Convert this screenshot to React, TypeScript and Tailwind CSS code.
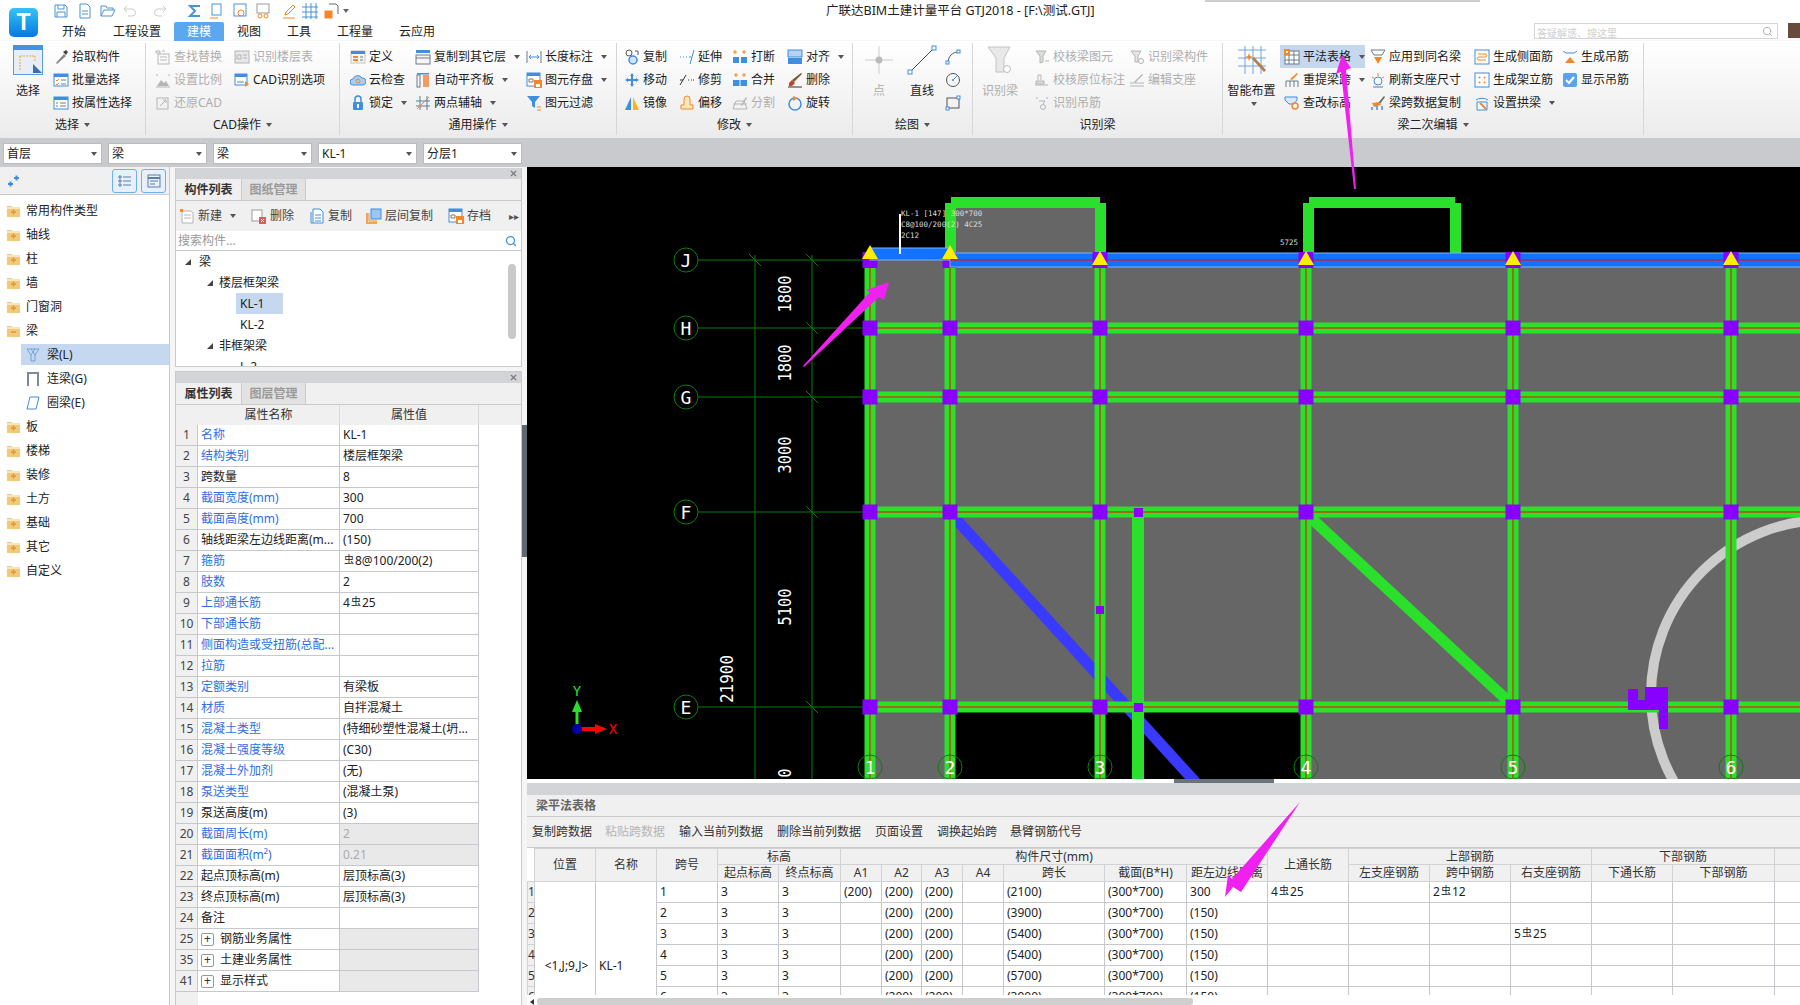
import type { ReactNode } from "react";
import { Search, X } from "lucide-react";

const B = "#3f8ee0";
const O = "#f5872a";
const G = "#b5b5b5";
const D = "#6d7a88";

// ribbon icons, all in a 16x16 box
const icons: Record<string, ReactNode> = {
  pick: <><path d="M3 14l8-9 2 2-9 8z" fill="#888" /><path d="M10 3l3 3 2-3-2-2z" fill="#444" /></>,
  batch: <><rect x="1" y="2" width="14" height="12" fill="#fff" stroke={B} /><rect x="1" y="2" width="14" height="3" fill={B} /><path d="M3 8l1 1 2-2M3 12l1 1 2-2" stroke={O} fill="none" /><path d="M8 8h5M8 12h5" stroke={D} /></>,
  propsel: <><rect x="1" y="2" width="14" height="12" fill="#fff" stroke={B} /><rect x="1" y="2" width="14" height="3" fill={B} /><path d="M3 8h2M3 11h2M7 8h6M7 11h6" stroke={D} /></>,
  find: <><rect x="3" y="5" width="11" height="10" fill="none" stroke={G} /><path d="M1 2h4v2H1zM7 2h3M5 8h7M5 11h7" stroke={G} fill="none" /></>,
  scale: <><path d="M1 3h2M13 3h2M1 15h14" stroke={G} /><path d="M2 14l4-6 3 3 2-2 3 5z" fill={G} /></>,
  restore: <><rect x="2" y="3" width="11" height="11" fill="none" stroke={G} /><path d="M5 11l6-6M8 5h3v3" stroke={G} fill="none" /></>,
  floors: <><rect x="1" y="2" width="14" height="12" fill="#e8e8e8" stroke={G} /><path d="M3 6h4v4H3zM9 6h4M9 9h4" stroke={G} fill="none" /></>,
  cadopt: <><rect x="1" y="2" width="12" height="11" fill="#fff" stroke={B} /><rect x="1" y="2" width="12" height="3" fill={B} /><path d="M3 10h7" stroke={B} /><path d="M11 9l4 3-4 3z" fill={O} /></>,
  define: <><rect x="1" y="2" width="14" height="12" fill="#f5f5f5" stroke="#c4c4c4" /><rect x="1" y="2" width="14" height="3" fill={B} /><path d="M3 8h5M3 11h5" stroke={O} strokeWidth="2" /><path d="M10 8h3M10 11h3" stroke={D} /></>,
  cloud: <><path d="M3 13a3 3 0 010-6 5 5 0 019-1 3.5 3.5 0 011 7z" fill="#a9cdf0" stroke={B} /><circle cx="8" cy="9" r="2" fill="none" stroke={O} /></>,
  lock: <><rect x="3" y="7" width="10" height="8" rx="1" fill={B} /><path d="M5 7V4a3 3 0 016 0v3" fill="none" stroke={B} strokeWidth="1.5" /><rect x="7" y="9" width="2" height="4" fill="#fff" /></>,
  copyfloor: <><rect x="1" y="1" width="14" height="3" fill={B} /><rect x="1" y="6" width="14" height="9" fill="#f5f5f5" stroke={D} /><path d="M1 9h14" stroke={D} /></>,
  autoalign: <><rect x="2" y="1" width="12" height="1.5" fill={B} /><rect x="2" y="3" width="3" height="12" fill="none" stroke={D} /><rect x="8" y="3" width="6" height="12" fill="#f59a62" /></>,
  twopoint: <><path d="M1 6h14M1 11h14M5 1v14M12 1v14" stroke={D} /><path d="M2 14L14 2" stroke={O} /></>,
  dim: <><path d="M1 2v12M15 2v12" stroke={D} /><path d="M3 8h10M5 6L3 8l2 2M11 6l2 2-2 2" stroke={B} fill="none" /></>,
  savepic: <><rect x="1" y="1" width="13" height="13" fill="#fff" stroke={B} /><rect x="1" y="1" width="13" height="3" fill={B} /><path d="M3 7h4v3H3z" fill="none" stroke={D} /><rect x="8" y="8" width="8" height="8" fill={O} /><rect x="10" y="12" width="4" height="3" fill="#fff" /></>,
  funnel: <><path d="M1 1h13L9 7v6l-3-2V7z" fill={B} /><path d="M11 12h4M11 15h4" stroke={O} /></>,
  copy: <><circle cx="5" cy="4" r="3" fill="none" stroke="#555" /><circle cx="9" cy="11" r="4" fill="#cfe3f7" stroke={B} strokeWidth="1.5" /><path d="M11 2h3v4" stroke="#555" fill="none" /></>,
  move: <path d="M8 1l2 3H9v3h3V6l3 2-3 2V9H9v3h1l-2 3-2-3h1V9H4v1L1 8l3-2v1h3V4H6z" fill={B} />,
  mirror: <><path d="M7 2v13H1z" fill={B} /><path d="M9 2v13h6z" fill="#fdb515" /></>,
  extend: <path d="M1 8h1M4 8h1M7 8h1M10 8h2M15 1L11 15" stroke={B} fill="none" />,
  trim: <path d="M1 13l6-10M1 8h3M9 8h1M12 8h1M14 8h1" stroke="#333" fill="none" />,
  offset: <path d="M2 14v-4h3V4a3 3 0 016 0v6h3v4z" fill="#fce7b8" stroke={O} />,
  brk: <><path d="M3 1v4M1 3h4M12 1v4M10 3h4" stroke={O} /><rect x="1" y="8" width="6" height="6" fill={B} /><rect x="9" y="8" width="6" height="6" fill={B} /></>,
  merge: <><path d="M4 1v4M2 3h4M12 1v4M10 3h4" stroke={O} /><rect x="1" y="8" width="14" height="6" fill={B} /><path d="M8 8v6" stroke="#fff" /></>,
  split: <><path d="M1 14h14L12 6H4zM1 9h14" fill="none" stroke={G} /><path d="M9 10l5-8 1 1-5 8z" fill={G} /></>,
  align: <><rect x="1" y="1" width="14" height="7" fill="#b7d3f2" stroke={B} /><rect x="1" y="9" width="14" height="6" fill={B} /></>,
  erase: <><path d="M14 1l1 1-8 8-2-2z" fill="#7a5a3a" /><path d="M5 8l3 3-3 3H2v-3z" fill="#c0451f" /><path d="M1 15h14" stroke="#333" /></>,
  rotate: <><circle cx="8" cy="9" r="6" fill="none" stroke={B} strokeWidth="1.5" /><path d="M6 1l5 2-5 3z" fill={O} /></>,
  arc: <><path d="M3 14C3 7 8 3 13 3" fill="none" stroke="#555" /><rect x="1" y="12" width="3" height="3" fill="#fff" stroke={B} /><rect x="12" y="1" width="3" height="3" fill="#fff" stroke={B} /></>,
  circle: <><circle cx="8" cy="8" r="6.5" fill="none" stroke="#555" /><path d="M8 8l4-4" stroke={B} /><circle cx="8" cy="8" r="1" fill={B} /></>,
  rect: <><rect x="2" y="3" width="12" height="10" fill="none" stroke="#555" /><rect x="1" y="12" width="3" height="3" fill="#fff" stroke={B} /><rect x="12" y="1" width="3" height="3" fill="#fff" stroke={B} /></>,
  chk: <><path d="M2 2h10l-3 5v6l-3 1V7z" fill="#ddd" stroke={G} /><path d="M11 12h4" stroke={G} /></>,
  chk2: <><path d="M2 9h8v3H2zM1 13h13" stroke={G} fill="#ddd" /><path d="M4 8V3h3v5" stroke={G} fill="none" /></>,
  chk3: <><path d="M2 3h2M12 3h2M5 6h6l-2 3" stroke={G} fill="none" /><circle cx="9" cy="12" r="2.5" fill="none" stroke={G} /></>,
  chk4: <><path d="M2 2h10l-3 5v6H6V7z" fill="#e5e5e5" stroke={G} /><circle cx="12" cy="12" r="2.5" fill="none" stroke={G} /></>,
  edit: <><path d="M1 11h14M1 14h14" stroke={G} /><path d="M5 10l8-8 1 1-8 8z" fill={G} /></>,
  grid: <><rect x="1" y="2" width="14" height="13" fill="#fff" stroke={D} /><path d="M5 2v13M10 2v13M1 6h14M1 11h14" stroke={D} /><rect x="0" y="0" width="6" height="6" fill={O} /><rect x="2" y="2" width="2" height="2" fill="#fff" /></>,
  reget: <><path d="M2 9h12M2 9v6M6 9v6M10 9v6M14 9v6" stroke={D} fill="none" /><path d="M6 7l7-6 1 1-6 6z" fill={O} /></>,
  level: <><path d="M1 2h12v3l-3 4H5L1 5z" fill="#dbe8f6" stroke={B} /><circle cx="11" cy="11" r="3" fill="none" stroke={O} strokeWidth="1.5" /></>,
  applysame: <><path d="M1 1h14l-3 5H4z" fill="none" stroke={D} /><path d="M4 8h8l-4 7z" fill={O} /></>,
  refresh: <><circle cx="8" cy="9" r="4" fill="none" stroke={B} /><path d="M8 1v3M2 5l2 1M14 5l-2 1" stroke={O} /><path d="M3 15h10" stroke={D} /></>,
  spancopy: <><path d="M9 7l5-6 1 1-5 7z" fill="#666" /><path d="M2 8l7-1 2 3-7 2z" fill={O} /><path d="M2 15v-3M7 15v-4M12 15v-4" stroke={B} strokeWidth="1.5" /></>,
  side: <><rect x="1" y="1" width="14" height="14" fill="#fff" stroke={B} /><path d="M4 5h8a2 2 0 010 3H4a2 2 0 000 3h8" fill="none" stroke={O} /></>,
  stand: <><rect x="1" y="1" width="14" height="14" fill="#fff" stroke={B} /><path d="M5 5h1v1H5zM10 5h1v1h-1zM5 10h1v1H5zM10 10h1v1h-1z" fill={O} stroke={O} /></>,
  arch: <><path d="M2 5a8 5 0 0112 0M3 7h10v8H3z" fill="#f2f7fc" stroke={B} /><path d="M6 8l6 6" stroke={O} strokeWidth="2" /></>,
  hanger: <><path d="M1 2l3 2h8l3-2" stroke={B} fill="none" /><path d="M3 14h10L8 8z" fill={O} /></>,
  check: <><rect x="1" y="1" width="14" height="14" rx="2" fill="#5aa3ee" /><path d="M4 8l3 3 5-6" stroke="#fff" strokeWidth="2" fill="none" /></>,
  newdoc: <><path d="M3 3h9l2 2v10H3z" fill="#fff" stroke={G} /><path d="M5 7h7M5 10h7" stroke={G} /><rect x="1" y="1" width="3" height="3" fill={O} /></>,
  del: <><rect x="1" y="2" width="10" height="11" fill="#fff" stroke="#999" /><rect x="8" y="9" width="7" height="7" fill="#e05a5a" /><path d="M10 11l3 3M13 11l-3 3" stroke="#fff" /></>,
  dup: <><path d="M4 1h7l3 3v11H4z" fill="#fff" stroke={B} /><path d="M2 4v11h2M6 7h6M6 10h6M6 13h6" stroke={B} fill="none" /></>,
  floorcopy: <><rect x="5" y="1" width="10" height="10" fill="#9cc6f2" stroke={B} /><path d="M1 5v10h10" stroke={O} strokeWidth="1.5" fill="none" /><path d="M3 5v8h8" stroke={O} fill="none" /></>,
};

function Ico({ name, size = 16 }: { name: string; size?: number }) {
  return (
    <svg width={size} height={size} viewBox="0 0 16 16" className="shrink-0">
      {icons[name]}
    </svg>
  );
}

function Caret({ off }: { off?: boolean }) {
  return <span className={`ml-[5px] h-0 w-0 border-x-[3px] border-t-[4px] border-x-transparent ${off ? "border-t-[#bbb]" : "border-t-[#555]"}`} />;
}

function Tool({ icon, text, caret, off, active }: { icon: string; text: string; caret?: boolean; off?: boolean; active?: boolean }) {
  return (
    <div className={`flex h-[23px] items-center gap-[3px] whitespace-nowrap text-[12px] leading-none ${off ? "text-[#aeaeae]" : "text-[#1c1c1c]"} ${active ? "bg-[#c5d7ef] pl-[4px]" : ""}`}>
      <Ico name={icon} />
      <span>{text}</span>
      {caret && <Caret />}
    </div>
  );
}

function Group({ label, caret = true, className, children }: { label: string; caret?: boolean; className: string; children: ReactNode }) {
  return (
    <div className={`flex h-[92px] shrink-0 flex-col border-r border-[#d4d6d8] ${className}`}>
      <div className="flex h-[72px] pt-[2px]">{children}</div>
      <div className="flex h-[22px] items-center justify-center text-[12px] leading-none text-[#222]">
        {label}
        {caret && <Caret />}
      </div>
    </div>
  );
}

function BigLabel({ text, off }: { text: string; off?: boolean }) {
  return <div className={`mt-[10px] whitespace-nowrap text-center text-[12px] leading-none ${off ? "text-[#aeaeae]" : "text-[#1c1c1c]"}`}>{text}</div>;
}

function Ribbon() {
  return (
    <div className="flex h-[97px] bg-gradient-to-b from-white to-[#ebebeb] pt-[2px] shadow-[0_1px_2px_#888]">
      <Group label="选择" className="w-[146px]">
        <div className="ml-[13px] w-[40px]">
          <svg width="30" height="30" viewBox="0 0 30 30">
            <rect x=".5" y=".5" width="29" height="29" fill="#e8eef7" stroke="#5b9be0" />
            <rect width="30" height="5" fill="#4a90e2" />
            <path d="M7 11h15v6M7 11v14" stroke="#f5a623" strokeDasharray="2 1" fill="none" />
            <path d="M20 19l9 9h-9z" fill="#3a6fb0" />
          </svg>
          <div className="w-[30px]"><BigLabel text="选择" /></div>
        </div>
        <div>
          <Tool icon="pick" text="拾取构件" />
          <Tool icon="batch" text="批量选择" />
          <Tool icon="propsel" text="按属性选择" />
        </div>
      </Group>
      <Group label="CAD操作" className="w-[194px]">
        <div className="ml-[9px] w-[79px]">
          <Tool icon="find" text="查找替换" off />
          <Tool icon="scale" text="设置比例" off />
          <Tool icon="restore" text="还原CAD" off />
        </div>
        <div>
          <Tool icon="floors" text="识别楼层表" off />
          <Tool icon="cadopt" text="CAD识别选项" />
        </div>
      </Group>
      <Group label="通用操作" className="w-[277px]">
        <div className="ml-[10px] w-[65px]">
          <Tool icon="define" text="定义" />
          <Tool icon="cloud" text="云检查" />
          <Tool icon="lock" text="锁定" caret />
        </div>
        <div className="w-[111px]">
          <Tool icon="copyfloor" text="复制到其它层" caret />
          <Tool icon="autoalign" text="自动平齐板" caret />
          <Tool icon="twopoint" text="两点辅轴" caret />
        </div>
        <div>
          <Tool icon="dim" text="长度标注" caret />
          <Tool icon="savepic" text="图元存盘" caret />
          <Tool icon="funnel" text="图元过滤" />
        </div>
      </Group>
      <Group label="修改" className="w-[236px]">
        <div className="ml-[7px] w-[55px]">
          <Tool icon="copy" text="复制" />
          <Tool icon="move" text="移动" />
          <Tool icon="mirror" text="镜像" />
        </div>
        <div className="w-[53px]">
          <Tool icon="extend" text="延伸" />
          <Tool icon="trim" text="修剪" />
          <Tool icon="offset" text="偏移" />
        </div>
        <div className="w-[55px]">
          <Tool icon="brk" text="打断" />
          <Tool icon="merge" text="合并" />
          <Tool icon="split" text="分割" off />
        </div>
        <div>
          <Tool icon="align" text="对齐" caret />
          <Tool icon="erase" text="删除" />
          <Tool icon="rotate" text="旋转" />
        </div>
      </Group>
      <Group label="绘图" className="w-[120px]">
        <div className="w-[52px]">
          <svg width="30" height="30" viewBox="0 0 30 30" className="mx-auto">
            <path d="M15 1v28M1 15h28" stroke="#ccc" />
            <circle cx="15" cy="15" r="3.500" fill="#bbb" />
          </svg>
          <BigLabel text="点" off />
        </div>
        <div className="w-[34px]">
          <svg width="30" height="30" viewBox="0 0 30 30" className="mx-auto">
            <path d="M3 27L27 3" stroke="#444" />
            <rect x="1" y="25" width="4" height="4" fill="#fff" stroke={B} />
            <rect x="25" y="1" width="4" height="4" fill="#fff" stroke={B} />
          </svg>
          <BigLabel text="直线" />
        </div>
        <div className="ml-[6px]">
          <div className="flex h-[23px] items-center"><Ico name="arc" /></div>
          <div className="flex h-[23px] items-center"><Ico name="circle" /></div>
          <div className="flex h-[23px] items-center"><Ico name="rect" /></div>
        </div>
      </Group>
      <Group label="识别梁" caret={false} className="w-[250px]">
        <div className="w-[54px]">
          <svg width="30" height="30" viewBox="0 0 30 30" className="mx-auto">
            <path d="M3 2h22l-6 11v14h-8V13z" fill="#e8e8e8" stroke="#c4c4c4" />
            <circle cx="22" cy="24" r="3.500" fill="#fff" stroke="#bbb" />
          </svg>
          <BigLabel text="识别梁" off />
        </div>
        <div className="ml-[7px] w-[95px]">
          <Tool icon="chk" text="校核梁图元" off />
          <Tool icon="chk2" text="校核原位标注" off />
          <Tool icon="chk3" text="识别吊筋" off />
        </div>
        <div>
          <Tool icon="chk4" text="识别梁构件" off />
          <Tool icon="edit" text="编辑支座" off />
        </div>
      </Group>
      <Group label="梁二次编辑" className="w-[421px]">
        <div className="flex w-[57px] flex-col items-center">
          <svg width="30" height="30" viewBox="0 0 30 30">
            <path d="M1 5h28M1 13h28M1 21h28M8 1v28M16 1v28M24 1v28" stroke="#6ea6e0" fill="none" />
            <path d="M15 14l12 13 2-2-12-13z" fill="#b08050" />
            <path d="M12 8l1 3 3 1-3 1-1 3-1-3-3-1 3-1z" fill={O} />
          </svg>
          <BigLabel text="智能布置" />
          <div className="mt-[5px] flex justify-center"><Caret /></div>
        </div>
        <div className="w-[90px]">
          <div className="w-[85px]"><Tool icon="grid" text="平法表格" caret active /></div>
          <div className="pl-[4px]"><Tool icon="reget" text="重提梁跨" caret /></div>
          <div className="pl-[4px]"><Tool icon="level" text="查改标高" /></div>
        </div>
        <div className="w-[104px]">
          <Tool icon="applysame" text="应用到同名梁" />
          <Tool icon="refresh" text="刷新支座尺寸" />
          <Tool icon="spancopy" text="梁跨数据复制" />
        </div>
        <div className="w-[88px]">
          <Tool icon="side" text="生成侧面筋" />
          <Tool icon="stand" text="生成架立筋" />
          <Tool icon="arch" text="设置拱梁" caret />
        </div>
        <div>
          <Tool icon="hanger" text="生成吊筋" />
          <Tool icon="check" text="显示吊筋" />
        </div>
      </Group>
    </div>
  );
}

function Qat({ children, className }: { children: ReactNode; className: string }) {
  return (
    <svg width="16" height="16" viewBox="0 0 16 16" className={`shrink-0 ${className}`} fill="none" stroke="#4b93d8">
      {children}
    </svg>
  );
}

function TopBar() {
  const tabs = [
    ["开始", "w-[52px]"],
    ["工程设置", "w-[74px]"],
    ["建模", "w-[50px]"],
    ["视图", "w-[50px]"],
    ["工具", "w-[50px]"],
    ["工程量", "w-[62px]"],
    ["云应用", "w-[62px]"],
  ];
  return (
    <div className="flex h-[41px] bg-white">
      <div className="w-[48px] shrink-0 pl-[9px] pt-[8px]">
        <div className="flex h-[29px] w-[29px] items-center justify-center rounded-[5px] bg-gradient-to-b from-[#35c3f5] to-[#0a78e0] font-['Liberation_Sans',sans-serif] text-[23px] font-bold leading-none text-white">T</div>
      </div>
      <div className="min-w-0 flex-1">
        <div className="flex h-[22px] items-center">
          <Qat className="ml-[5px]"><path d="M2 2h10l2 2v10H2zM5 2v4h6V2M4 14V9h8v5" /></Qat>
          <Qat className="ml-[8px]"><path d="M3 1h7l3 3v11H3zM5 8h6M5 11h6" /></Qat>
          <Qat className="ml-[7px]"><path d="M1 13V3h5l1 2h6v2M1 13l3-6h11l-3 6z" /></Qat>
          <Qat className="ml-[6px] opacity-50"><path d="M5 3L2 6l3 3M2 6h8a3 3 0 010 7H6" stroke="#999" /></Qat>
          <Qat className="ml-[14px] opacity-50"><path d="M11 3l3 3-3 3M14 6H6a3 3 0 000 7h4" stroke="#999" /></Qat>
          <Qat className="ml-[19px]"><path d="M13 3H3l5 5-5 5h10" strokeWidth="2" /></Qat>
          <Qat className="ml-[6px]"><rect x="3" y="1" width="9" height="11" /><path d="M1 15h8" stroke="#f5872a" /></Qat>
          <Qat className="ml-[7px]"><rect x="2" y="1" width="12" height="12" /><circle cx="9" cy="10" r="3" stroke="#f5872a" /></Qat>
          <Qat className="ml-[7px]"><rect x="2" y="1" width="12" height="9" stroke="#999" /><circle cx="5" cy="13" r="2" stroke="#f5872a" /><circle cx="11" cy="13" r="2" stroke="#f5872a" /></Qat>
          <Qat className="ml-[10px]"><path d="M12 2l2 2-7 7-3 1 1-3zM2 15h12" stroke="#f5872a" /></Qat>
          <Qat className="ml-[5px]"><path d="M4 0v16M9 0v16M14 0v16M0 4h16M0 9h16M0 14h16" /></Qat>
          <Qat className="ml-[6px]"><path d="M5 1h7l2 2v8" stroke="#666" /><rect x="1" y="8" width="7" height="7" fill="#f5872a" stroke="#f5872a" /></Qat>
          <span className="ml-[3px] h-0 w-0 border-x-[3px] border-t-[4px] border-x-transparent border-t-[#666]" />
          <span className="ml-[477px] whitespace-nowrap text-[12.5px] leading-none text-[#222]">广联达BIM土建计量平台 GTJ2018 - [F:\测试.GTJ]</span>
        </div>
        <div className="flex h-[19px] items-stretch">
          {tabs.map(([name, w]) => (
            <div key={name} className={`flex shrink-0 items-center justify-center rounded-t-[2px] text-[12px] leading-none ${w} ${name === "建模" ? "bg-[#5ba7f0] text-white" : "text-[#222]"}`}>
              {name}
            </div>
          ))}
          <div className="ml-[1086px] mt-[1px] flex h-[16px] w-[244px] items-end overflow-hidden border border-[#d5d5d5] pl-[2px] text-[10px] leading-none text-[#cfcfcf]">
            <span className="whitespace-nowrap">答疑解惑、搜这里</span>
            <Search className="mb-[1px] ml-auto mr-[4px] text-[#aaa]" size={11} />
          </div>
          <div className="ml-[10px] mt-[1px] h-[15px] w-[12px] bg-[#6a4a3a]" />
        </div>
      </div>
    </div>
  );
}

function Selects() {
  const items = ["首层", "梁", "梁", "KL-1", "分层1"];
  return (
    <div className="flex h-[29px] gap-[6px] bg-[#c8cacd] pl-[3px] pt-[5px]">
      {items.map((t, i) => (
        <div key={i} className="flex h-[21px] w-[99px] items-center justify-between border border-[#bbb] bg-white px-[3px] text-[12px] leading-none text-[#222]">
          {t}
          <span className="mr-[1px] h-0 w-0 border-x-[3px] border-t-[4px] border-x-transparent border-t-[#555]" />
        </div>
      ))}
    </div>
  );
}

function Folder({ open }: { open?: boolean }) {
  return (
    <svg width="15" height="14" viewBox="0 0 15 14" className="shrink-0">
      <path d="M1 2h5v1h8v10H1z" fill="#f2c97a" />
      <path d="M1 4h13" stroke="#fff" />
      <path d={open ? "M5 8h5" : "M5 8h5M7.500 5.500v5"} stroke="#e09a2b" strokeWidth="1.500" />
    </svg>
  );
}

function LeftPanel() {
  const before = ["常用构件类型", "轴线", "柱", "墙", "门窗洞"];
  const after = ["板", "楼梯", "装修", "土方", "基础", "其它", "自定义"];
  const row = "flex h-[24px] items-center gap-[5px] pl-[6px] text-[12px] leading-none text-[#222]";
  const sub = "flex h-[21px] items-center gap-[7px] pl-[5px] text-[12px] leading-none text-[#222]";
  return (
    <div className="flex w-[170px] shrink-0 flex-col border-r border-[#c8cacd] bg-white">
      <div className="mb-[4px] flex h-[28px] items-center border-b border-[#c8cacd] bg-[#f0f0f0] pl-[7px]">
        <svg width="12" height="12" viewBox="0 0 12 12"><path d="M1 9h5M3.500 6.500v5M7 3h5M9.500 .5v5" stroke="#3f8ee0" strokeWidth="2" /></svg>
        <div className="ml-auto mr-[3px] flex gap-[4px]">
          <div className="flex h-[24px] w-[25px] items-center justify-center rounded-[3px] border border-[#6db0f0] bg-[#e8f1fb]">
            <svg width="14" height="14" viewBox="0 0 14 14" fill="none" stroke="#5a7ea8"><path d="M1 2h2v2H1zM1 6h2v2H1zM1 10h2v2H1zM5 3h8M5 7h8M5 11h8" /></svg>
          </div>
          <div className="flex h-[24px] w-[25px] items-center justify-center rounded-[3px] border border-[#6db0f0] bg-[#e8f1fb]">
            <svg width="14" height="14" viewBox="0 0 14 14" fill="none" stroke="#5a7ea8"><rect x="1" y="1" width="12" height="12" /><path d="M1 4h12" strokeWidth="2" /><path d="M3 7h8M3 10h5" /></svg>
          </div>
        </div>
      </div>
      {before.map((t) => (
        <div key={t} className={row}><Folder />{t}</div>
      ))}
      <div className={row}><Folder open />梁</div>
      <div className="ml-[21px] mt-[1px] flex h-[21px] items-center bg-[#c6d8ef]">
        <div className={sub}>
          <svg width="14" height="14" viewBox="0 0 14 14" fill="none" stroke="#6fa3d8"><path d="M1 1h12L9 7v6H5V7zM5 1l4 6M9 1L5 7" /></svg>
          梁(L)
        </div>
      </div>
      <div className="ml-[21px] mt-[3px]">
        <div className={sub}>
          <svg width="14" height="15" viewBox="0 0 14 15" fill="none" stroke="#7a8a9c" strokeWidth="2"><path d="M2 15V2h10v13" /></svg>
          连梁(G)
        </div>
      </div>
      <div className="ml-[21px] mt-[3px]">
        <div className={sub}>
          <svg width="14" height="14" viewBox="0 0 14 14" fill="none" stroke="#3f8ee0"><path d="M4 1h9l-3 12H1z" /></svg>
          圈梁(E)
        </div>
      </div>
      <div className="h-[2px]" />
      {after.map((t) => (
        <div key={t} className={row}><Folder />{t}</div>
      ))}
    </div>
  );
}

function PanelHead({ tabs }: { tabs: [string, string] }) {
  return (
    <>
      <div className="flex h-[11px] items-center justify-end bg-[#d2d4d8] pr-[3px]">
        <X size={9} className="text-[#777]" strokeWidth={3} />
      </div>
      <div className="flex h-[22px] border-b border-[#c8cacd] bg-[#f0f0f0]">
        <div className="flex w-[65px] items-center justify-center text-[12px] font-bold leading-none text-[#333]">{tabs[0]}</div>
        <div className="flex w-[65px] items-center justify-center border-x border-[#c8cacd] bg-[#e2e2e2] text-[12px] font-bold leading-none text-[#9a9a9a]">{tabs[1]}</div>
      </div>
    </>
  );
}

function Tri() {
  return <span className="h-0 w-0 border-b-[6px] border-l-[6px] border-b-[#444] border-l-transparent" />;
}

function ComponentList() {
  const tool = "flex items-center gap-[3px] text-[12px] leading-none text-[#444]";
  const line = "flex h-[21px] items-center text-[12px] leading-none text-[#222]";
  return (
    <div className="flex h-[199px] flex-col border-x border-b border-[#c8cacd] bg-white">
      <PanelHead tabs={["构件列表", "图纸管理"]} />
      <div className="flex h-[30px] items-center bg-[#f0f0f0] pl-[3px] pr-[2px]">
        <div className={tool}><Ico name="newdoc" />新建<Caret /></div>
        <div className={`${tool} ml-[15px]`}><Ico name="del" />删除</div>
        <div className={`${tool} ml-[15px]`}><Ico name="dup" />复制</div>
        <div className={`${tool} ml-[14px]`}><Ico name="floorcopy" />层间复制</div>
        <div className={`${tool} ml-[15px]`}><Ico name="savepic" />存档</div>
        <span className="ml-auto text-[10px] leading-none text-[#555]">▸▸</span>
      </div>
      <div className="flex h-[20px] items-center justify-between border-b border-[#c8cacd] px-[2px] text-[12px] leading-none text-[#999]">
        搜索构件...
        <Search size={12} className="mr-[2px] text-[#3f8ee0]" strokeWidth={2.500} />
      </div>
      <div className="relative min-h-0 flex-1 overflow-hidden">
        <div className={`${line} gap-[8px] pl-[9px]`}><Tri />梁</div>
        <div className={`${line} gap-[6px] pl-[31px]`}><Tri />楼层框架梁</div>
        <div className="ml-[60px] flex h-[21px] w-[47px] items-center bg-[#c6d8ef] pl-[4px] text-[12px] leading-none text-[#222]">KL-1</div>
        <div className={`${line} pl-[64px]`}>KL-2</div>
        <div className={`${line} gap-[6px] pl-[31px]`}><Tri />非框架梁</div>
        <div className={`${line} pl-[64px]`}>L-2</div>
        <div className="absolute right-[5px] top-[13px] h-[75px] w-[8px] rounded-[4px] bg-[#c9c9c9]" />
      </div>
    </div>
  );
}

function Steel({ n, d }: { n: string; d: string }) {
  return (
    <span className="whitespace-nowrap">
      {n}
      <span className="relative top-[-2px] mx-[1px] text-[10px]">虫</span>
      {d}
    </span>
  );
}

type Prop = { id: number; name: string; value?: ReactNode; blue?: boolean; shade?: boolean; dim?: boolean; plus?: boolean };

const props: Prop[] = [
  { id: 1, name: "名称", value: "KL-1", blue: true },
  { id: 2, name: "结构类别", value: "楼层框架梁", blue: true },
  { id: 3, name: "跨数量", value: "8" },
  { id: 4, name: "截面宽度(mm)", value: "300", blue: true },
  { id: 5, name: "截面高度(mm)", value: "700", blue: true },
  { id: 6, name: "轴线距梁左边线距离(m...", value: "(150)" },
  { id: 7, name: "箍筋", value: <Steel n="" d="8@100/200(2)" />, blue: true },
  { id: 8, name: "肢数", value: "2", blue: true },
  { id: 9, name: "上部通长筋", value: <Steel n="4" d="25" />, blue: true },
  { id: 10, name: "下部通长筋", blue: true },
  { id: 11, name: "侧面构造或受扭筋(总配...", blue: true },
  { id: 12, name: "拉筋", blue: true },
  { id: 13, name: "定额类别", value: "有梁板", blue: true },
  { id: 14, name: "材质", value: "自拌混凝土", blue: true },
  { id: 15, name: "混凝土类型", value: "(特细砂塑性混凝土(坍...", blue: true },
  { id: 16, name: "混凝土强度等级", value: "(C30)", blue: true },
  { id: 17, name: "混凝土外加剂", value: "(无)", blue: true },
  { id: 18, name: "泵送类型", value: "(混凝土泵)", blue: true },
  { id: 19, name: "泵送高度(m)", value: "(3)" },
  { id: 20, name: "截面周长(m)", value: "2", blue: true, shade: true, dim: true },
  { id: 21, name: "截面面积(m²)", value: "0.21", blue: true, shade: true, dim: true },
  { id: 22, name: "起点顶标高(m)", value: "层顶标高(3)" },
  { id: 23, name: "终点顶标高(m)", value: "层顶标高(3)" },
  { id: 24, name: "备注" },
  { id: 25, name: "钢筋业务属性", shade: true, plus: true },
  { id: 35, name: "土建业务属性", shade: true, plus: true },
  { id: 41, name: "显示样式", shade: true, plus: true },
];

function PropertyList() {
  return (
    <div className="flex min-h-0 flex-1 flex-col border-x border-t border-[#c8cacd] bg-white">
      <PanelHead tabs={["属性列表", "图层管理"]} />
      <div className="flex h-[20px] bg-[#f0f0f0] text-[12px] leading-none text-[#333]">
        <div className="w-[22px]" />
        <div className="flex w-[142px] items-center justify-center border-r border-[#d8d8d8]">属性名称</div>
        <div className="flex w-[139px] items-center justify-center border-r border-[#d8d8d8]">属性值</div>
      </div>
      {props.map((p) => (
        <div key={p.id} className="flex h-[21px] w-[303px] border-b border-[#c5c8cc] text-[12px] leading-none">
          <div className="flex w-[22px] shrink-0 items-center justify-center border-r border-[#c5c8cc] bg-[#f0f0f0] text-[#444]">{p.id}</div>
          <div className={`flex w-[142px] shrink-0 items-center gap-[6px] whitespace-nowrap border-r border-[#c5c8cc] pl-[3px] ${p.blue ? "text-[#2f6fe4]" : "text-[#222]"}`}>
            {p.plus && (
              <span className="flex h-[13px] w-[13px] items-center justify-center rounded-[2px] border border-[#999] text-[12px] text-[#333]">+</span>
            )}
            {p.name}
          </div>
          <div className={`flex w-[139px] shrink-0 items-center whitespace-nowrap border-r border-[#c5c8cc] pl-[3px] ${p.shade ? "bg-[#e9e9e9]" : ""} ${p.dim ? "text-[#aaa]" : "text-[#222]"}`}>
            {p.value}
          </div>
        </div>
      ))}
      <div className="w-[22px] flex-1 bg-[#f0f0f0]" />
    </div>
  );
}

const axesX = [870, 950, 1100, 1306, 1513, 1731];
const axesY = [328, 397, 512, 707];
const labelsY: [string, number][] = [["J", 260], ["H", 328], ["G", 397], ["F", 512], ["E", 707]];

function Dim({ t, y, x = 791, len = 37 }: { t: string; y: number; x?: number; len?: number }) {
  return (
    <text transform={`translate(${x} ${y}) rotate(-90)`} fill="#fff" fontSize="17" textAnchor="middle" textLength={len} lengthAdjust="spacingAndGlyphs">
      {t}
    </text>
  );
}

function Canvas() {
  return (
    <div className="h-[612px] bg-black">
      <svg width="1273" height="612" viewBox="527 167 1273 612" className="block font-['DejaVu_Sans_Mono',monospace]">
        {/* slabs */}
        <path d="M870 260H1800V707H870zM870 707H950V779H870zM1306 707H1800V779H1306zM950 205H1100V260H950z" fill="#666" />
        {/* slanted beams, circular beam */}
        <path d="M955 518L1198 785" stroke="#3a3aff" strokeWidth="11" />
        <circle cx="1826" cy="695" r="175" fill="none" stroke="#ccc" strokeWidth="10" />
        {/* upper frames */}
        <path d="M951 197H1100V203H1106V260H1095V208H956V260H945V203H951z" fill="#2be02b" />
        <path d="M1309 197H1455V203H1461V253H1450V208H1314V253H1303V203H1309z" fill="#2be02b" />
        {/* grid beams */}
        {axesX.map((x) => <rect key={x} x={x - 5.500} y="255" width="11" height="524" fill="#2be02b" />)}
        {axesY.map((y) => <rect key={y} x="870" y={y - 5.500} width="930" height="11" fill="#2be02b" />)}
        <rect x="1132" y="512" width="12" height="267" fill="#2be02b" />
        <path d="M1311 518L1508 701" stroke="#2be02b" strokeWidth="11" />
        {/* axis lines */}
        <g stroke="#0b7d0b" fill="none">
          <path d="M755 255V779M812 255V779" />
          {labelsY.map(([l, y]) => <line key={l} x1="698" y1={y} x2="870" y2={y} />)}
          {labelsY.map(([l, y]) => <circle key={l} cx="686" cy={y} r="12" />)}
          {labelsY.map(([l, y]) => <line key={l} x1="806" y1={y - 6} x2="818" y2={y + 6} />)}
          <line x1="749" y1="254" x2="761" y2="266" />
        </g>
        {/* red centre lines */}
        <g stroke="#f00">
          {axesX.map((x) => <line key={x} x1={x} y1="260" x2={x} y2="779" />)}
          {axesY.map((y) => <line key={y} x1="870" y1={y} x2="1800" y2={y} />)}
        </g>
        {/* columns */}
        <g fill="#8800ff">
          {axesX.flatMap((x) => axesY.map((y) => <rect key={`${x}-${y}`} x={x - 7.500} y={y - 7.500} width="15" height="15" />))}
          <rect x="862.500" y="252" width="15" height="16" />
          <rect x="942.500" y="252" width="15" height="16" />
          <rect x="1134" y="508" width="9" height="9" />
          <rect x="1134" y="703" width="9" height="9" />
          <rect x="1096" y="606" width="8" height="8" />
          <path d="M1628 689H1638V700H1645V687H1668V729H1659V710H1628z" />
        </g>
        {/* selected beam */}
        <rect x="870" y="248" width="80" height="12" fill="#1173ff" stroke="#80b4ff" />
        <rect x="950" y="253" width="860" height="14" fill="#1173ff" stroke="#80b4ff" />
        <line x1="950" y1="260" x2="1800" y2="260" stroke="#f00" />
        {axesX.slice(2).map((x) => <rect key={x} x={x - 7.500} y="252" width="15" height="16" fill="#8800ff" />)}
        {axesX.map((x, i) => (
          <path key={x} d={i < 2 ? `M${x} 245L${x + 8} 259H${x - 8}z` : `M${x} 251L${x + 8} 265H${x - 8}z`} fill="#ffee00" />
        ))}
        <rect x="899" y="214" width="2" height="40" fill="#fff" />
        <g fontSize="7.500" fill="#ddd">
          <text x="901" y="216">KL-1 [147] 300*700</text>
          <text x="901" y="227">C8@100/200(2) 4C25</text>
          <text x="901" y="238">2C12</text>
          <text x="1280" y="245">5725</text>
        </g>
        {/* axis labels */}
        <g fill="#fff" fontSize="18" textAnchor="middle">
          {labelsY.map(([l, y]) => <text key={l} x="686" y={y + 7}>{l}</text>)}
        </g>
        <g stroke="#0b7d0b" fill="none">
          {axesX.map((x) => <circle key={x} cx={x} cy="767" r="12" />)}
        </g>
        <g fill="#fff" fontSize="18" textAnchor="middle">
          {axesX.map((x, i) => <text key={x} x={x} y="774">{i + 1}</text>)}
        </g>
        <Dim t="1800" y={294} />
        <Dim t="1800" y={363} />
        <Dim t="3000" y={455} />
        <Dim t="5100" y={607} />
        <Dim t="21900" x={733} y={679} len={48} />
        <Dim t="0" y={773} len={9} />
        {/* xyz marker */}
        <path d="M577 729V710" stroke="#2be02b" strokeWidth="3" />
        <path d="M577 700l5 12h-10z" fill="#2be02b" />
        <path d="M577 729h20" stroke="#f00" strokeWidth="4" />
        <path d="M607 729l-12-5v10z" fill="#f00" />
        <circle cx="577" cy="729" r="5" fill="#0000a8" />
        <text x="577" y="696" fontSize="14" fill="#2be02b" textAnchor="middle">Y</text>
        <text x="613" y="734" fontSize="14" fill="#f00" textAnchor="middle">X</text>
      </svg>
    </div>
  );
}

const th = "border border-[#d0d2d5] bg-[#f0f0f0] p-0 text-center font-normal text-[#333]";
const td = "overflow-hidden whitespace-nowrap border border-[#c5c8cc] bg-white pl-[3px] text-[#222]";
const colW = ["w-[7px]", "w-[61px]", "w-[61px]", "w-[61px]", "w-[61px]", "w-[62px]", "w-[41px]", "w-[40px]", "w-[41px]", "w-[41px]", "w-[101px]", "w-[82px]", "w-[81px]", "w-[81px]", "w-[81px]", "w-[81px]", "w-[81px]", "w-[81px]", "w-[102px]", "w-[100px]"];
const spans = ["(2100)", "(3900)", "(5400)", "(5400)", "(5700)", "(3900)", "(3900)", "(3900)"];

function BeamTable() {
  return (
    <div className="h-[147px] overflow-hidden">
      <table className="w-[1346px] table-fixed border-collapse text-[12px] leading-none">
        <colgroup>
          {colW.map((c, i) => <col key={i} className={c} />)}
        </colgroup>
        <thead>
          <tr className="h-[16px]">
            <th rowSpan={2} className="bg-white p-0" />
            <th rowSpan={2} className={th}>位置</th>
            <th rowSpan={2} className={th}>名称</th>
            <th rowSpan={2} className={th}>跨号</th>
            <th colSpan={2} className={th}>标高</th>
            <th colSpan={7} className={th}>构件尺寸(mm)</th>
            <th rowSpan={2} className={th}>上通长筋</th>
            <th colSpan={3} className={th}>上部钢筋</th>
            <th colSpan={2} className={th}>下部钢筋</th>
            <th colSpan={1} className={th} />
          </tr>
          <tr className="h-[17px]">
            {["起点标高", "终点标高", "A1", "A2", "A3", "A4", "跨长", "截面(B*H)", "距左边线距离", "左支座钢筋", "跨中钢筋", "右支座钢筋", "下通长筋", "下部钢筋", "侧面"].map((h) => (
              <th key={h} className={th}>{h}</th>
            ))}
          </tr>
        </thead>
        <tbody>
          {spans.map((s, i) => (
            <tr key={i} className="h-[21px]">
              <td className="border border-[#d0d2d5] bg-[#f0f0f0] p-0 text-[#333]">{i + 1}</td>
              {i === 0 && <td rowSpan={8} className={`${td} text-center`}>&lt;1,J;9,J&gt;</td>}
              {i === 0 && <td rowSpan={8} className={td}>KL-1</td>}
              <td className={td}>{i + 1}</td>
              <td className={td}>3</td>
              <td className={td}>3</td>
              <td className={td}>{i === 0 ? "(200)" : ""}</td>
              <td className={td}>(200)</td>
              <td className={td}>(200)</td>
              <td className={td} />
              <td className={td}>{s}</td>
              <td className={td}>(300*700)</td>
              <td className={td}>{i === 0 ? "300" : "(150)"}</td>
              <td className={td}>{i === 0 && <Steel n="4" d="25" />}</td>
              <td className={td} />
              <td className={td}>{i === 0 && <Steel n="2" d="12" />}</td>
              <td className={td}>{i === 2 && <Steel n="5" d="25" />}</td>
              <td className={td} />
              <td className={td} />
              <td className={td} />
              <td className={td} />
            </tr>
          ))}
        </tbody>
      </table>
    </div>
  );
}

function BottomPanel() {
  const actions = [
    ["复制跨数据", "ml-[5px] text-[#333]"],
    ["粘贴跨数据", "ml-[13px] text-[#b5b5b5]"],
    ["输入当前列数据", "ml-[14px] text-[#333]"],
    ["删除当前列数据", "ml-[14px] text-[#333]"],
    ["页面设置", "ml-[14px] text-[#333]"],
    ["调换起始跨", "ml-[14px] text-[#333]"],
    ["悬臂钢筋代号", "ml-[13px] text-[#333]"],
  ];
  return (
    <div className="flex min-h-0 flex-1 flex-col">
      <div className="h-[12px] bg-[#d2d4d8]" />
      <div className="flex h-[22px] items-center border-b border-[#c8cacd] bg-[#f0f0f0] pl-[9px] text-[12px] font-bold leading-none text-[#666]">梁平法表格</div>
      <div className="flex h-[31px] items-center border-b border-[#c8cacd] bg-[#f0f0f0] text-[12px] leading-none">
        {actions.map(([t, c]) => <span key={t} className={c}>{t}</span>)}
      </div>
      <BeamTable />
      <div className="mt-[3px] flex h-[7px] items-center bg-white">
        <span className="ml-[3px] h-0 w-0 border-y-[3px] border-r-[4px] border-y-transparent border-r-[#333]" />
        <div className="ml-[3px] h-[7px] w-[656px] rounded-[3px] bg-[#cfcfcf]" />
      </div>
    </div>
  );
}

export default function App() {
  return (
    <div className="relative flex h-[1005px] w-[1800px] flex-col overflow-hidden bg-white font-['Noto_Sans','Noto_Sans_CJK_SC',sans-serif]">
      <TopBar />
      <Ribbon />
      <Selects />
      <div className="flex min-h-0 flex-1">
        <LeftPanel />
        <div className="w-[5px] shrink-0 bg-[#f5f5f5]" />
        <div className="flex w-[347px] shrink-0 flex-col gap-[4px] bg-[#f5f5f5] pt-[1px]">
          <ComponentList />
          <PropertyList />
        </div>
        <div className="flex w-[5px] shrink-0 flex-col bg-[#f5f5f5] pt-[258px]">
          <div className="h-[132px] bg-[#5f6770]" />
        </div>
        <div className="flex min-w-0 flex-1 flex-col">
          <Canvas />
          <div className="h-[4px] shrink-0 bg-white pl-[647px]">
            <div className="h-[4px] w-[100px] bg-[#6b737b]" />
          </div>
          <BottomPanel />
        </div>
      </div>

      {/* hand-drawn pink arrows lying over the screenshot */}
      <svg width="1800" height="1005" viewBox="0 0 1800 1005" className="pointer-events-none absolute left-0 top-0" fill="#f020f0">
        <path d="M803 366L870 292L866 290L889 282L884 300L879 297L804 367z" />
        <path d="M1342 55L1351 68L1346 70L1356 189L1354 189L1341 72L1336 74z" />
        <path d="M1300 802L1241 892L1233 887L1225 897L1228 875L1232 879z" />
      </svg>
      <div className="absolute left-[1205px] top-0 h-[2px] w-[275px] bg-[#cfcfcf]" />
    </div>
  );
}
